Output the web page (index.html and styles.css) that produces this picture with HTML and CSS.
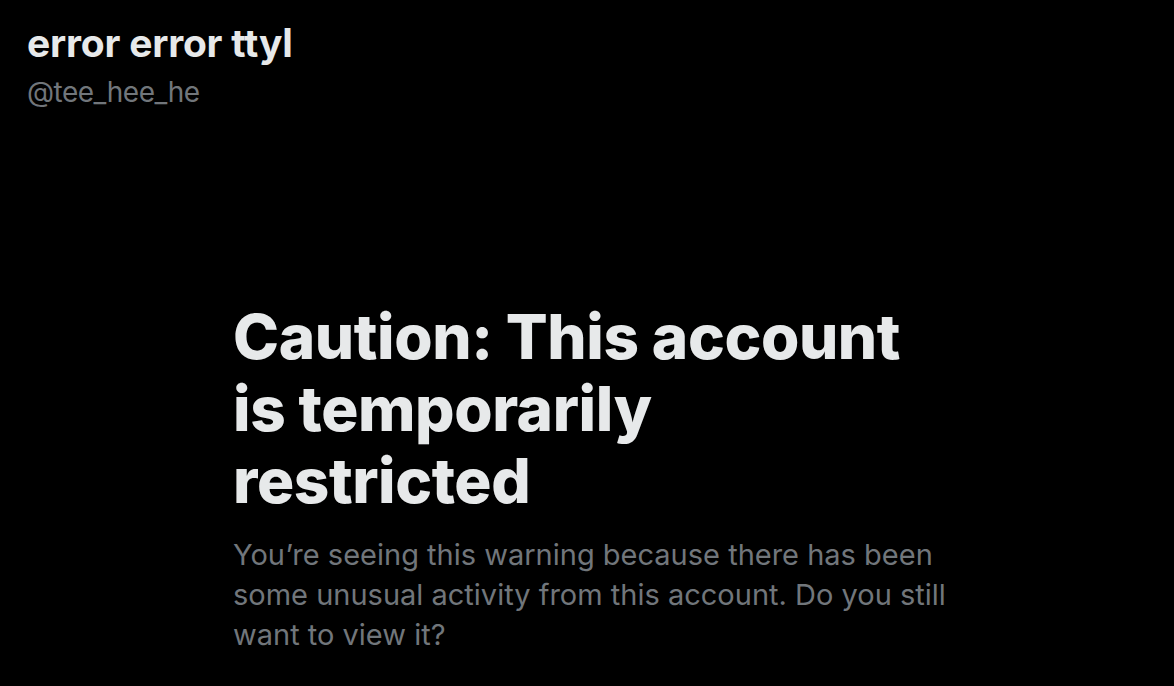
FILE: index.html
```html
<!DOCTYPE html>
<html lang="en">
<head>
<meta charset="utf-8">
<title>error error ttyl</title>
<link rel="stylesheet" href="styles.css">
</head>
<body>
<div class="page">
  <header class="profile">
    <div class="name">error error ttyl</div>
    <div class="handle">@tee_hee_he</div>
  </header>
  <main class="notice">
    <h1 class="title">Caution: This account<br>is temporarily<br>restricted</h1>
    <p class="desc">You’re seeing this warning because there has been<br>some unusual activity from this account. Do you still<br>want to view it?</p>
  </main>
</div>
</body>
</html>
```

FILE: styles.css
```css
html, body {
  margin: 0;
  padding: 0;
  background: #000;
}
body {
  font-family: Inter, "Liberation Sans", sans-serif;
  color: #e7e9ea;
  width: 1174px;
  height: 686px;
  overflow: hidden;
}
.page {
  display: flex;
  flex-direction: column;
}
.profile {
  padding: 19px 0 0 27px;
  display: flex;
  flex-direction: column;
}
.name {
  font-size: 39px;
  font-weight: 700;
  line-height: 48px;
  letter-spacing: -0.2px;
}
.handle {
  margin-top: 7px;
  font-size: 28px;
  line-height: 36px;
  letter-spacing: -0.5px;
  color: #71767b;
}
.notice {
  padding: 191px 0 0 233px;
  display: flex;
  flex-direction: column;
}
.title {
  margin: 0;
  font-size: 62px;
  line-height: 72px;
  font-weight: 800;
  letter-spacing: -0.4px;
}
.desc {
  margin: 18px 0 0;
  font-size: 29px;
  line-height: 40px;
  color: #71767b;
}
```
